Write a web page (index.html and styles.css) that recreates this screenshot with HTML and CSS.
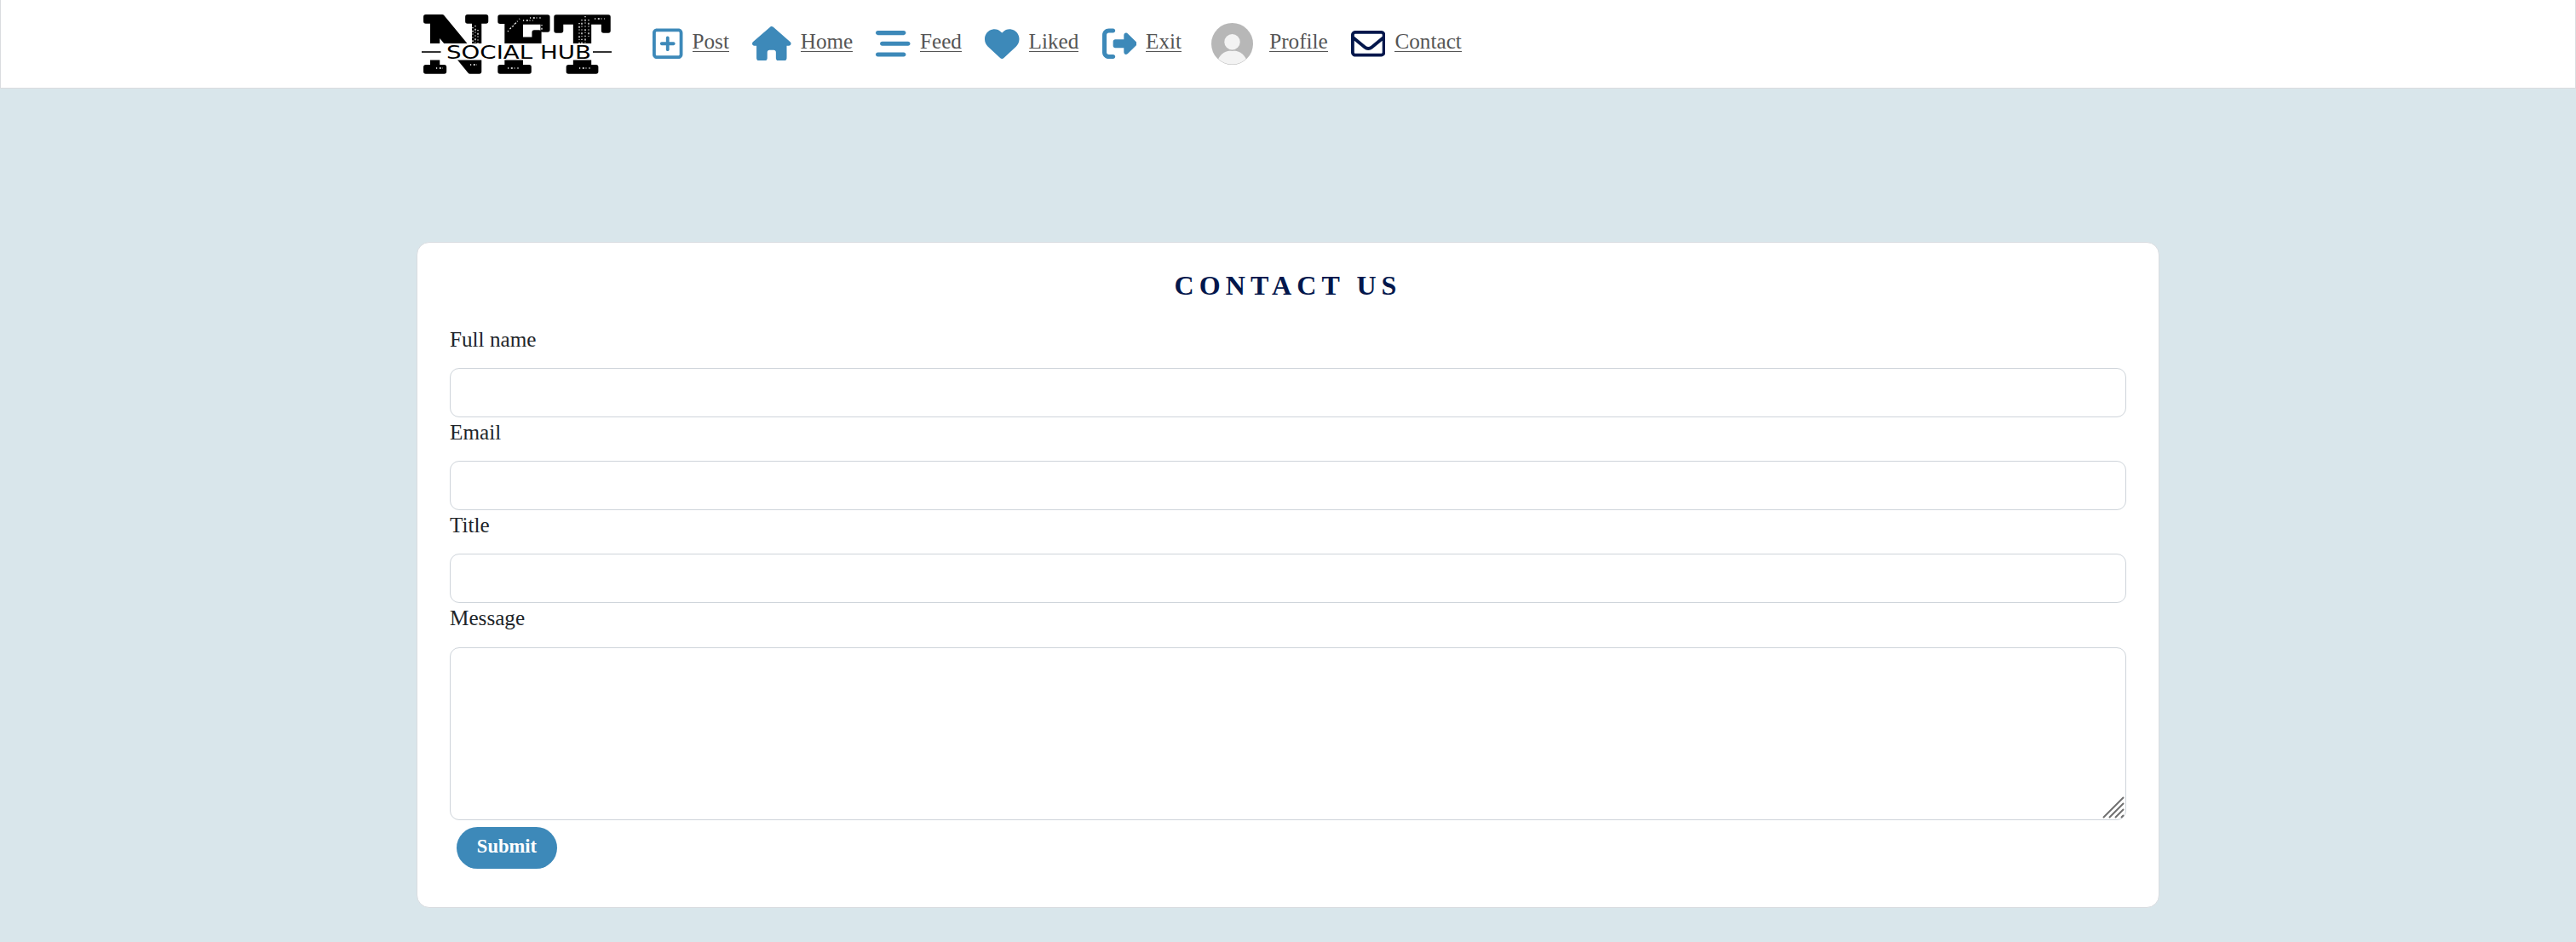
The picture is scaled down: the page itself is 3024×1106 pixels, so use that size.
FILE: index.html
```html
<!DOCTYPE html>
<html lang="en">
<head>
<meta charset="utf-8">
<title>Contact | NFT Social Hub</title>
<link rel="stylesheet" href="styles.css">
</head>
<body>
<header class="navbar">
  <a class="logo" href="#">
    <svg width="226" height="74" viewBox="0 0 226 74" role="img" aria-label="NFT Social Hub">
      <g class="logo-big">
        <text x="4" y="69" textLength="78" lengthAdjust="spacingAndGlyphs">N</text>
        <text x="91" y="69" textLength="61" lengthAdjust="spacingAndGlyphs">F</text>
        <text x="160" y="69" textLength="63" lengthAdjust="spacingAndGlyphs">T</text>
      </g>
      <g class="logo-wear">
        <path d="M60 20v16M63 17v20M66 15v21M69 20v16"/>
        <path d="M110 16l8-9M122 9h12M130 6h14M104 22l8-9M144 14v6"/>
        <path d="M188 12v24M191 8v28M195 4v32M199 8v20M206 7h12"/>
        <path d="M20 65h8M60 61h8M104 65h14M188 65h14"/>
      </g>
      <rect class="logo-gap" x="0" y="36" width="226" height="19.500"/>
      <path class="logo-rule" d="M3 46h22.500M204 46h22"/>
      <text class="logo-small" x="32" y="54" textLength="170" lengthAdjust="spacingAndGlyphs">SOCIAL HUB</text>
    </svg>
  </a>
  <nav class="nav">
    <a class="nav-link" href="#"><svg class="icon icon-post" viewBox="0 0 448 512"><path d="M64 80c-8.800 0-16 7.200-16 16V416c0 8.800 7.200 16 16 16H384c8.800 0 16-7.200 16-16V96c0-8.800-7.200-16-16-16H64zM0 96C0 60.700 28.700 32 64 32H384c35.300 0 64 28.700 64 64V416c0 35.300-28.700 64-64 64H64c-35.300 0-64-28.700-64-64V96zM200 344V280H136c-13.300 0-24-10.700-24-24s10.700-24 24-24h64V168c0-13.300 10.700-24 24-24s24 10.700 24 24v64h64c13.300 0 24 10.700 24 24s-10.700 24-24 24H248v64c0 13.300-10.700 24-24 24s-24-10.700-24-24z"/></svg><span>Post</span></a>
    <a class="nav-link" href="#"><svg class="icon icon-home" viewBox="0 0 576 512"><path d="M575.8 255.500c0 18-15 32.100-32 32.100h-32l.7 160.200c0 2.700-.2 5.400-.5 8.100V472c0 22.100-17.900 40-40 40H456c-1.100 0-2.200 0-3.300-.1c-1.400 .1-2.800 .1-4.200 .1H416 392c-22.100 0-40-17.900-40-40V448 384c0-17.700-14.300-32-32-32H256c-17.700 0-32 14.300-32 32v64 24c0 22.100-17.900 40-40 40H160 128.100c-1.500 0-3-.1-4.500-.2c-1.200 .1-2.400 .2-3.600 .2H104c-22.100 0-40-17.900-40-40V360c0-.9 0-1.900 .1-2.800V287.600H32c-18 0-32-14-32-32.100c0-9 3-17 10-24L266.400 8c7-7 15-8 22-8s15 2 21 7L564.800 231.500c8 7 12 15 11 24z"/></svg><span>Home</span></a>
    <a class="nav-link" href="#"><svg class="icon" viewBox="0 0 512 512"><path d="M0 96C0 78.300 14.300 64 32 64H416c17.700 0 32 14.300 32 32s-14.300 32-32 32H32C14.300 128 0 113.700 0 96zM64 256c0-17.700 14.300-32 32-32H480c17.700 0 32 14.300 32 32s-14.300 32-32 32H96c-17.700 0-32-14.300-32-32zM448 416c0 17.700-14.300 32-32 32H32c-17.700 0-32-14.300-32-32s14.300-32 32-32H416c17.700 0 32 14.300 32 32z"/></svg><span>Feed</span></a>
    <a class="nav-link" href="#"><svg class="icon" viewBox="0 0 512 512"><path d="M47.600 300.400L228.300 469.100c7.500 7 17.400 10.900 27.700 10.900s20.200-3.900 27.700-10.900L464.400 300.400c30.400-28.300 47.600-68 47.600-109.500v-5.800c0-69.900-50.500-129.500-119.400-141C347 36.500 300.600 51.400 268 84L256 96 244 84c-32.600-32.600-79-47.500-124.600-39.900C50.500 55.600 0 115.200 0 185.100v5.800c0 41.500 17.200 81.200 47.600 109.500z"/></svg><span>Liked</span></a>
    <a class="nav-link" href="#"><svg class="icon" viewBox="0 0 512 512"><path d="M377.900 105.900L500.700 228.700c7.200 7.200 11.300 17.100 11.300 27.300s-4.100 20.100-11.300 27.300L377.900 406.100c-6.400 6.400-15 9.900-24 9.900c-18.700 0-33.900-15.200-33.900-33.900l0-62.100-128 0c-17.700 0-32-14.300-32-32l0-64c0-17.700 14.300-32 32-32l128 0 0-62.100c0-18.700 15.200-33.900 33.900-33.900c9 0 17.600 3.600 24 9.900zM160 96L96 96c-17.700 0-32 14.300-32 32l0 256c0 17.700 14.300 32 32 32l64 0c17.700 0 32 14.300 32 32s-14.300 32-32 32l-64 0c-53 0-96-43-96-96L0 128C0 75 43 32 96 32l64 0c17.700 0 32 14.300 32 32s-14.300 32-32 32z"/></svg><span>Exit</span></a>
    <a class="nav-link" href="#"><svg class="avatar" viewBox="0 0 48 48"><circle cx="24" cy="24" r="24" fill="#b7b7b7"/><path d="M8 41.500C11 35 17 31.500 24 31.500S37 35 40 41.500A24 24 0 0 1 8 41.500z" fill="#f3f3f3"/><circle cx="24" cy="22.300" r="10" fill="#b7b7b7"/><circle cx="24" cy="21.800" r="9" fill="#f3f3f3"/></svg><span>Profile</span></a>
    <a class="nav-link active" href="#"><svg class="icon" viewBox="0 0 512 512"><path d="M64 112c-8.800 0-16 7.200-16 16v22.100L220.500 291.700c20.700 17 50.400 17 71.100 0L464 150.100V128c0-8.800-7.200-16-16-16H64zM48 212.200V384c0 8.800 7.200 16 16 16H448c8.800 0 16-7.200 16-16V212.200L322 328.800c-38.400 31.500-93.700 31.500-132 0L48 212.200zM0 128C0 92.700 28.700 64 64 64H448c35.300 0 64 28.700 64 64V384c0 35.300-28.700 64-64 64H64c-35.300 0-64-28.700-64-64V128z"/></svg><span>Contact</span></a>
  </nav>
</header>
<main class="card">
  <h1 class="title">Contact us</h1>
  <form class="form">
    <label class="label" for="name">Full name</label>
    <input class="control" id="name" type="text">
    <label class="label" for="email">Email</label>
    <input class="control" id="email" type="email">
    <label class="label" for="subject">Title</label>
    <input class="control" id="subject" type="text">
    <label class="label" for="message">Message</label>
    <div class="message">
      <textarea class="control control-area" id="message"></textarea>
      <svg class="grip" width="26" height="26" viewBox="0 0 26 26"><path d="M1 25L25 1M8 25L25 8M15 25L25 15M22 25L25 22"/></svg>
    </div>
    <button class="submit" type="button">Submit</button>
  </form>
</main>
</body>
</html>
```
FILE: styles.css
```css
* {
  box-sizing: border-box;
}

body {
  margin: 0;
  min-height: 1106px;
  background: #d9e6eb;
  color: #212529;
  font-family: "Liberation Serif", "Times New Roman", serif;
  font-size: 25.2px;
}

.navbar {
  display: flex;
  align-items: center;
  height: 104px;
  padding-left: 491px;
  background: #fff;
  border: 1px solid #dadcdf;
  border-top: 0;
}

.logo {
  display: flex;
  width: 226px;
  margin: 1px 48px 0 0;
}

.logo-big {
  font: bold 87px "DejaVu Serif", serif;
  fill: #000;
  stroke: #000;
  stroke-width: 5.5;
  stroke-linejoin: round;
}

.logo-wear {
  fill: none;
  stroke: #fff;
  stroke-width: 1.3;
  stroke-dasharray: 1.2 2.6 2 1.8 0.8 3;
}

.logo-gap {
  fill: #fff;
}

.logo-rule {
  stroke: #333;
  stroke-width: 2;
}

.logo-small {
  font: 21px "DejaVu Sans", sans-serif;
  fill: #000;
}

.nav {
  display: flex;
  gap: 27.200px;
}

.nav-link {
  display: flex;
  align-items: center;
  gap: 11px;
  height: 50px;
  color: #555;
  text-decoration: none;
}

.nav-link span {
  line-height: 22px;
  margin-top: -4px;
  border-bottom: 1px solid #555;
}

.icon {
  width: 40.500px;
  height: 40.500px;
  margin-top: -1.500px;
  fill: #3d89b9;
}

.icon-post {
  width: 35.500px;
}

.icon-home {
  width: 45.600px;
}

.active .icon {
  fill: #03174c;
}

.avatar {
  width: 49px;
  height: 49px;
  margin: -1px 8px 0 8px;
}

.card {
  width: 2046px;
  height: 782px;
  margin: 180px auto 0;
  padding: 31px 38px;
  background: #fff;
  border: 1px solid #d9dce0;
  border-radius: 15px;
}

.title {
  margin: 0 0 26.500px;
  color: #03174c;
  font-size: 32px;
  line-height: 38px;
  letter-spacing: 6.100px;
  text-align: center;
  text-transform: uppercase;
}

.form {
  display: flex;
  flex-direction: column;
}

.label {
  height: 51.300px;
  line-height: 36px;
}

.control {
  display: block;
  width: 100%;
  height: 58px;
  border: 1px solid #ced4da;
  border-radius: 11px;
  background: #fff;
}

.message {
  position: relative;
}

.control-area {
  height: 203px;
  resize: none;
}

.grip {
  position: absolute;
  right: 2px;
  bottom: 2px;
  fill: none;
  stroke: #707070;
  stroke-width: 2;
}

.submit {
  align-self: flex-start;
  width: 118px;
  height: 49px;
  margin: 8px 0 0 8px;
  padding: 0 0 2px;
  border: 0;
  border-radius: 25px;
  background: #3d89b9;
  color: #fff;
  font: bold 22.600px "Liberation Serif", "Times New Roman", serif;
}
```
